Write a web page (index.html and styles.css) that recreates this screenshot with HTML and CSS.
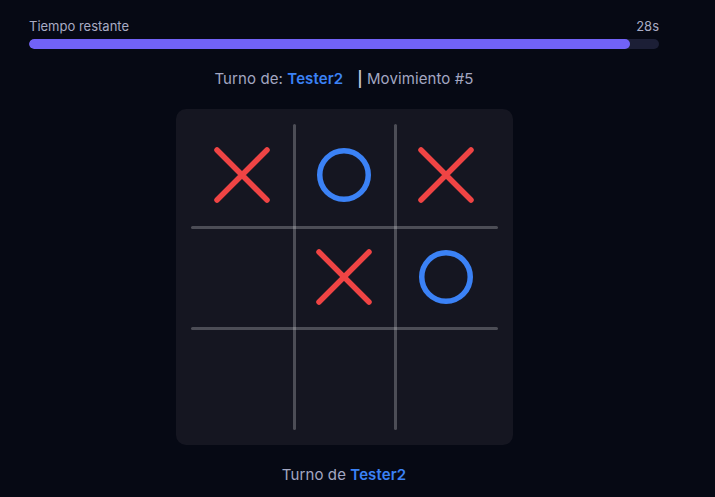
FILE: index.html
```html
<!DOCTYPE html>
<html lang="es">
<head>
    <meta charset="UTF-8">
    <meta name="viewport" content="width=device-width, initial-scale=1.0">
    <title>Tres en raya</title>
    <link rel="stylesheet" href="styles.css">
</head>
<body>
    <div class="game">
        <div class="timer">
            <div class="timer-head">
                <span>Tiempo restante</span>
                <span>28s</span>
            </div>
            <div class="track">
                <div class="fill" style="width:95.4%"></div>
            </div>
        </div>

        <div class="status">
            Turno de: <span class="player">Tester2</span><span class="move"><b>|</b> Movimiento #5</span>
        </div>

        <div class="board">
            <div class="line v1"></div>
            <div class="line v2"></div>
            <div class="line h1"></div>
            <div class="line h2"></div>
            <div class="cell">
                <svg class="x" viewBox="0 0 60 60"><path d="M5 5L55 55M55 5L5 55"/></svg>
            </div>
            <div class="cell">
                <svg class="o" viewBox="0 0 60 60"><circle cx="30" cy="30" r="24.25"/></svg>
            </div>
            <div class="cell">
                <svg class="x" viewBox="0 0 60 60"><path d="M5 5L55 55M55 5L5 55"/></svg>
            </div>
            <div class="cell"></div>
            <div class="cell">
                <svg class="x" viewBox="0 0 60 60"><path d="M5 5L55 55M55 5L5 55"/></svg>
            </div>
            <div class="cell">
                <svg class="o" viewBox="0 0 60 60"><circle cx="30" cy="30" r="24.25"/></svg>
            </div>
            <div class="cell"></div>
            <div class="cell"></div>
            <div class="cell"></div>
        </div>

        <div class="status bottom">
            Turno de <span class="player">Tester2</span>
        </div>
    </div>
</body>
</html>
```

FILE: styles.css
```css
body{
    margin: 0;
    background: #060914;
    font-family: Inter, "Noto Sans", sans-serif;
    color: #a3a7c2;
}
.game{
    width: 630px;
    margin-left: 29px;
    padding-top: 18px;
    display: flex;
    flex-direction: column;
    align-items: center;
}
.timer{
    width: 100%;
}
.timer-head{
    display: flex;
    justify-content: space-between;
    font-size: 13px;
    line-height: 16px;
    color: #a9acc4;
    margin-bottom: 5px;
}
.track{
    height: 10px;
    border-radius: 5px;
    background: #1c1f36;
    overflow: hidden;
}
.fill{
    height: 100%;
    border-radius: 5px;
    background: #7162f6;
}
.status{
    margin-top: 20px;
    font-size: 15px;
    line-height: 20px;
    letter-spacing: 0.1px;
    color: #a3a7c2;
}
.status .player{
    color: #3b82f6;
    font-weight: 600;
}
.status .move{
    margin-left: 14px;
}
.status .move b{
    color: #c4c7d8;
    font-weight: 600;
}
.board{
    position: relative;
    margin-top: 20px;
    width: 307px;
    height: 306px;
    padding: 15px;
    background: #151621;
    border-radius: 10px;
    display: grid;
    grid-template-columns: repeat(3, 1fr);
    grid-template-rows: repeat(3, 1fr);
}
.cell{
    display: flex;
    align-items: center;
    justify-content: center;
}
.cell svg{
    width: 60px;
    height: 60px;
}
.x path{
    fill: none;
    stroke: #ef4444;
    stroke-width: 5.5;
    stroke-linecap: round;
}
.o circle{
    fill: none;
    stroke: #3b82f6;
    stroke-width: 5.5;
}
.line{
    position: absolute;
    background: rgba(255, 255, 255, 0.24);
    border-radius: 2px;
}
.line.v1,
.line.v2{
    top: 15px;
    bottom: 15px;
    width: 3px;
}
.line.v1{ left: 117px; }
.line.v2{ left: 218px; }
.line.h1,
.line.h2{
    left: 15px;
    right: 15px;
    height: 3px;
}
.line.h1{ top: 117px; }
.line.h2{ top: 218px; }
.status.bottom{
    margin-top: 20px;
}
```
